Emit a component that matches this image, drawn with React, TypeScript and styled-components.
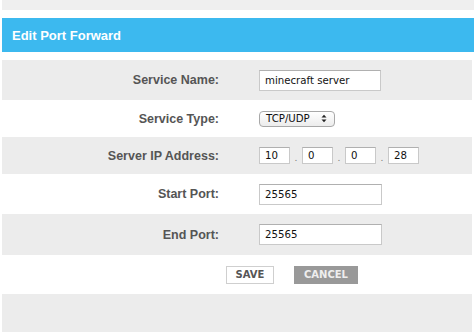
import React from "react";
import styled, { createGlobalStyle } from "styled-components";

const Global = createGlobalStyle`
  html, body { margin: 0; padding: 0; background: #fff; }
  body { width: 474px; height: 335px; overflow: hidden; }
`;

const Page = styled.div`
  display: flex;
  flex-direction: column;
  width: 474px;
  font-family: "Liberation Sans", Arial, sans-serif;
`;

const TopStrip = styled.div`
  height: 10px;
  margin-left: 2px;
  background: #efefef;
`;

const Header = styled.div`
  margin: 8px 0 8px 2px;
  height: 34px;
  background: #3cb9ef;
  display: flex;
  align-items: center;
  padding-left: 10px;
  color: #fff;
  font-weight: bold;
  font-size: 13px;
`;

const Form = styled.div`
  display: flex;
  flex-direction: column;
  margin: 0 2px;
`;

const Row = styled.div<{ $h: number; $shaded?: boolean }>`
  height: ${(p) => p.$h}px;
  background: ${(p) => (p.$shaded ? "#ececec" : "#fff")};
  display: grid;
  grid-template-columns: 217px 1fr;
  column-gap: 40px;
  align-items: center;
`;

const Label = styled.div`
  text-align: right;
  font-weight: bold;
  font-size: 12.5px;
  color: #555;
`;

const Field = styled.div`
  display: flex;
  align-items: center;
`;

const TextBox = styled.div<{ $w: number; $h: number }>`
  box-sizing: border-box;
  width: ${(p) => p.$w}px;
  height: ${(p) => p.$h}px;
  background: #fff;
  border: 1px solid #c9c9c9;
  border-top-color: #b0b0b0;
  display: flex;
  align-items: center;
  padding-left: 5px;
  font-family: "DejaVu Sans", Verdana, sans-serif;
  font-size: 10.2px;
  color: #111;
`;

const Select = styled.div`
  box-sizing: border-box;
  width: 76px;
  height: 16px;
  border: 1px solid #a8a8a8;
  border-radius: 4px;
  background: linear-gradient(#ffffff, #ececec);
  display: flex;
  align-items: center;
  justify-content: space-between;
  padding: 0 7px 0 6px;
  font-family: "DejaVu Sans", Verdana, sans-serif;
  font-size: 10.2px;
  color: #111;
`;

const Dot = styled.span`
  width: 12px;
  text-align: center;
  font-family: "DejaVu Sans", Verdana, sans-serif;
  font-size: 9px;
  color: #777;
  align-self: flex-end;
  padding-bottom: 1px;
`;

const ButtonRow = styled.div`
  height: 39px;
  display: flex;
  align-items: center;
  gap: 20px;
  padding-left: 224px;
`;

const Button = styled.div<{ $variant: "save" | "cancel"; $w: number }>`
  box-sizing: border-box;
  width: ${(p) => p.$w}px;
  height: 18px;
  display: flex;
  align-items: center;
  justify-content: center;
  font-family: "DejaVu Sans", Verdana, sans-serif;
  font-weight: bold;
  font-size: 10px;
  background: ${(p) => (p.$variant === "save" ? "#fff" : "#999")};
  color: ${(p) => (p.$variant === "save" ? "#555" : "#eee")};
  border: 1px solid ${(p) => (p.$variant === "save" ? "#cfcfcf" : "#999")};
`;

const Footer = styled.div`
  height: 38px;
  margin: 0 2px;
  background: #ececec;
`;

const Arrows = () => (
  <svg width="6" height="9" viewBox="0 0 6 9">
    <path d="M0.5 3.5 L3 0.8 L5.5 3.5 Z" fill="#222" />
    <path d="M0.5 5.5 L3 8.2 L5.5 5.5 Z" fill="#222" />
  </svg>
);

export default function App() {
  const ip = ["10", "0", "0", "28"];
  return (
    <>
      <Global />
      <Page>
        <TopStrip />
        <Header>Edit Port Forward</Header>
        <Form>
          <Row $h={40} $shaded>
            <Label>Service Name:</Label>
            <Field>
              <TextBox $w={122} $h={21}>minecraft server</TextBox>
            </Field>
          </Row>
          <Row $h={37}>
            <Label>Service Type:</Label>
            <Field>
              <Select>
                <span>TCP/UDP</span>
                <Arrows />
              </Select>
            </Field>
          </Row>
          <Row $h={37} $shaded>
            <Label>Server IP Address:</Label>
            <Field>
              {ip.map((v, i) => (
                <React.Fragment key={i}>
                  {i > 0 && <Dot>.</Dot>}
                  <TextBox $w={31} $h={17}>{v}</TextBox>
                </React.Fragment>
              ))}
            </Field>
          </Row>
          <Row $h={40}>
            <Label>Start Port:</Label>
            <Field>
              <TextBox $w={123} $h={21}>25565</TextBox>
            </Field>
          </Row>
          <Row $h={41} $shaded>
            <Label>End Port:</Label>
            <Field>
              <TextBox $w={123} $h={21}>25565</TextBox>
            </Field>
          </Row>
          <ButtonRow>
            <Button $variant="save" $w={48}>SAVE</Button>
            <Button $variant="cancel" $w={64}>CANCEL</Button>
          </ButtonRow>
        </Form>
        <Footer />
      </Page>
    </>
  );
}
